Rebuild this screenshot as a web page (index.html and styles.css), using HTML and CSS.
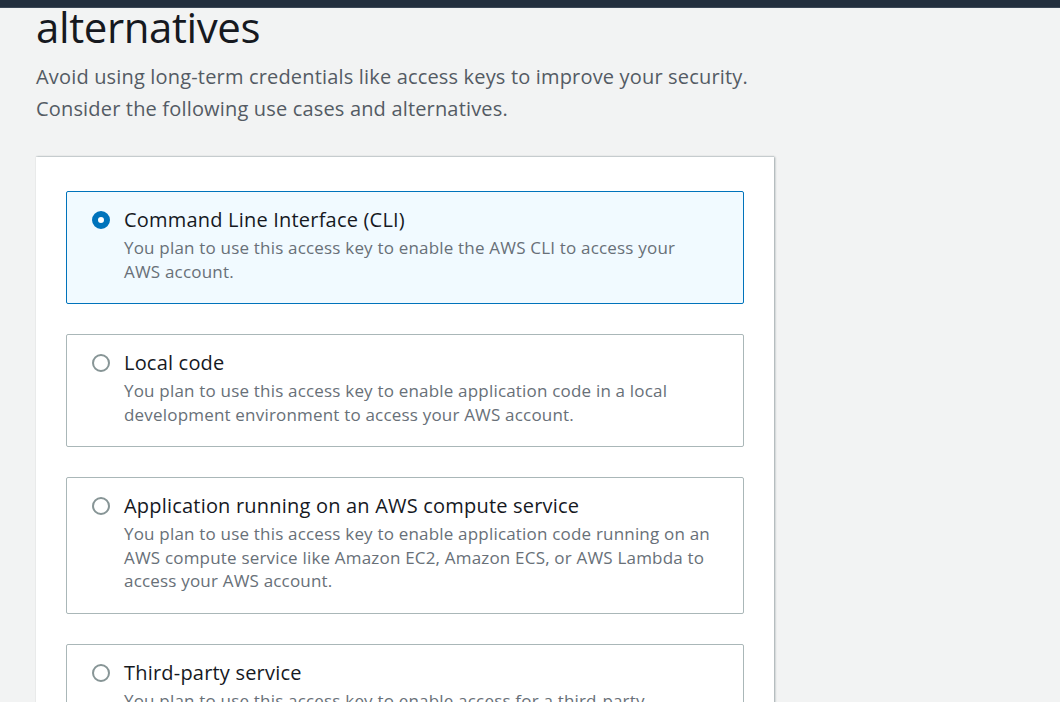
FILE: index.html
```html
<!DOCTYPE html>
<html lang="en">
<head>
<meta charset="utf-8">
<title>Access key best practices &amp; alternatives</title>
<link rel="stylesheet" href="styles.css">
</head>
<body>
<div class="topbar"></div>
<main class="page">
  <h1 class="title">alternatives</h1>
  <div class="intro">
    <p>Avoid using long-term credentials like access keys to improve your security.</p>
    <p>Consider the following use cases and alternatives.</p>
  </div>
  <section class="card">
    <div class="options">
      <label class="option selected">
        <span class="radio checked"></span>
        <span class="text">
          <span class="opt-title">Command Line Interface (CLI)</span>
          <span class="opt-desc">You plan to use this access key to enable the AWS CLI to access your AWS account.</span>
        </span>
      </label>
      <label class="option">
        <span class="radio"></span>
        <span class="text">
          <span class="opt-title">Local code</span>
          <span class="opt-desc">You plan to use this access key to enable application code in a local development environment to access your AWS account.</span>
        </span>
      </label>
      <label class="option">
        <span class="radio"></span>
        <span class="text">
          <span class="opt-title">Application running on an AWS compute service</span>
          <span class="opt-desc">You plan to use this access key to enable application code running on an AWS compute service like Amazon EC2, Amazon ECS, or AWS Lambda to access your AWS account.</span>
        </span>
      </label>
      <label class="option">
        <span class="radio"></span>
        <span class="text">
          <span class="opt-title">Third-party service</span>
          <span class="opt-desc">You plan to use this access key to enable access for a third-party application or service that monitors or manages your AWS resources.</span>
        </span>
      </label>
    </div>
  </section>
</main>
</body>
</html>
```

FILE: styles.css
```css
html, body {
  margin: 0;
  padding: 0;
  height: 100%;
  overflow: hidden;
}
body {
  background: #f2f3f3;
  font-family: "Open Sans", "Noto Sans", "Liberation Sans", sans-serif;
  color: #16191f;
}
.topbar {
  height: 7px;
  background: #232f3e;
  border-bottom: 1px solid #3b4756;
}
.page {
  padding: 0 0 0 36px;
}
.title {
  margin: 0;
  font-size: 42px;
  font-weight: 400;
  line-height: 38px;
  letter-spacing: -0.4px;
  color: #16191f;
}
.intro {
  margin-top: 15px;
  color: #545b64;
  font-size: 20px;
  letter-spacing: 0.17px;
}
.intro p {
  margin: 0;
  line-height: 32px;
}
.card {
  margin-top: 32px;
  width: 738px;
  background: #fff;
  box-shadow: 1px 0 2px rgba(0, 28, 36, 0.35), 0 -1px 1px rgba(0, 28, 36, 0.08);
  padding: 34px 30px 40px 30px;
  box-sizing: border-box;
}
.options {
  display: flex;
  flex-direction: column;
  gap: 30px;
}
.option {
  display: flex;
  align-items: flex-start;
  gap: 14px;
  border: 1px solid #aab7b8;
  border-radius: 2px;
  padding: 16px 20px 20px 25px;
  cursor: pointer;
}
.option.selected {
  border-color: #0073bb;
  background: #f1faff;
}
.radio {
  flex: none;
  width: 18px;
  height: 18px;
  margin-top: 3px;
  box-sizing: border-box;
  border-radius: 50%;
  border: 2px solid #879596;
  background: #fff;
}
.radio.checked {
  border: 6px solid #0073bb;
}
.text {
  display: flex;
  flex-direction: column;
  width: 588px;
}
.opt-title {
  font-size: 20px;
  line-height: 24px;
  letter-spacing: 0.2px;
  color: #16191f;
}
.opt-desc {
  margin-top: 4px;
  font-size: 17px;
  line-height: 23.5px;
  letter-spacing: 0.19px;
  color: #687078;
}
```
